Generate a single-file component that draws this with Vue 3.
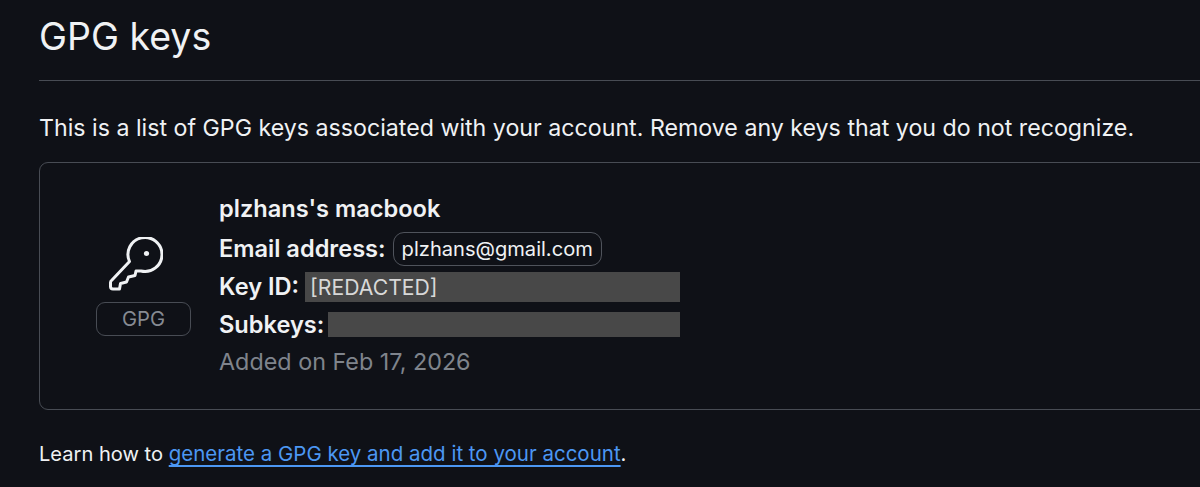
<script setup>
const line = 'This is a list of GPG keys associated with your account. Remove any keys that you do not recognize.'
</script>

<template>
  <div class="page">
    <div class="inner">
      <h1 class="title">GPG keys</h1>
      <p class="intro">{{ line }}</p>
      <div class="card">
        <div class="badge-col">
          <svg class="key" width="54" height="54" viewBox="0 0 54 54" fill="none" stroke="#f0f2f4" stroke-width="3" stroke-linejoin="round" stroke-linecap="round">
            <path d="M20.5 24.5A17 17 0 1 1 32 34L27 34L26 38.5L19.5 40L17.5 45L11.5 46.5L10.5 52L4 52Q1.5 52 1.5 49.5V45.5Q1.5 44 3 43Z" />
            <circle cx="37.5" cy="16.5" r="2.6" fill="#f0f2f4" stroke="none" />
          </svg>
          <span class="label">GPG</span>
        </div>
        <div class="info">
          <div class="row name">plzhans's macbook</div>
          <div class="row"><strong>Email address:</strong><span class="chip">plzhans@gmail.com</span></div>
          <div class="row"><strong>Key ID:</strong><span class="bar bar-id">[REDACTED]</span></div>
          <div class="row"><strong>Subkeys:</strong><span class="bar bar-sub"></span></div>
          <div class="row added">Added on Feb 17, 2026</div>
        </div>
      </div>
      <p class="learn">Learn how to <a class="link" href="#">generate a GPG key and add it to your account</a>.</p>
    </div>
  </div>
</template>

<style>
html, body { margin: 0; background: #0f1117; }
</style>

<style scoped>
.page {
  width: 1200px;
  height: 487px;
  overflow: hidden;
  background: #0f1117;
  font-family: Inter, "Liberation Sans", sans-serif;
  color: #f0f2f4;
}
.inner {
  width: 1240px;
  margin-left: 39px;
  padding-top: 14px;
}
.title {
  margin: 0;
  height: 66px;
  line-height: 46px;
  font-size: 37.5px;
  font-weight: 400;
  border-bottom: 1.5px solid #484c54;
}
.intro {
  margin: 30px 0 17px;
  font-size: 23.2px;
  line-height: 34px;
}
.card {
  display: flex;
  align-items: center;
  height: 248px;
  box-sizing: border-box;
  border: 1.5px solid #484c54;
  border-radius: 9px;
  padding-left: 56px;
}
.badge-col {
  width: 95px;
  flex: none;
  display: flex;
  flex-direction: column;
  align-items: flex-start;
  gap: 11px;
  margin-right: 28px;
}
.key { margin-left: 13px; }
.label {
  width: 95px;
  height: 34px;
  box-sizing: border-box;
  display: flex;
  align-items: center;
  justify-content: center;
  border: 1.5px solid #484c54;
  border-radius: 9px;
  color: #868b93;
  font-size: 20.2px;
}
.info {
  display: flex;
  flex-direction: column;
  align-self: flex-start;
  padding-top: 26.5px;
  font-size: 23.35px;
}
.row {
  display: flex;
  align-items: center;
  height: 38px;
}
.row strong, .name {
  font-weight: 600;
  font-size: 23.6px;
}
.name { margin-bottom: 2px; }
.chip {
  display: inline-flex;
  align-items: center;
  height: 34px;
  box-sizing: border-box;
  margin-left: 7px;
  padding: 0 8px;
  border: 1.5px solid #4f535b;
  border-radius: 11px;
  font-size: 20.1px;
}
.bar {
  display: block;
  background: #484848;
  color: #d8d8d8;
  font-size: 21.2px;
  line-height: 30px;
}
.bar-id { width: 370px; height: 30px; margin-left: 6px; padding-left: 5px; box-sizing: content-box; }
.bar-sub { width: 352px; height: 25px; margin-left: 4px; }
.added {
  color: #7f848c;
  margin-top: -1px;
}
.learn {
  margin: 31px 0 0;
  font-size: 20.1px;
  line-height: 26px;
}
.link {
  font-size: 20.5px;
  color: #4c97f3;
  text-decoration: underline;
  text-underline-offset: 4px;
  text-decoration-thickness: 1.5px;
}
</style>
